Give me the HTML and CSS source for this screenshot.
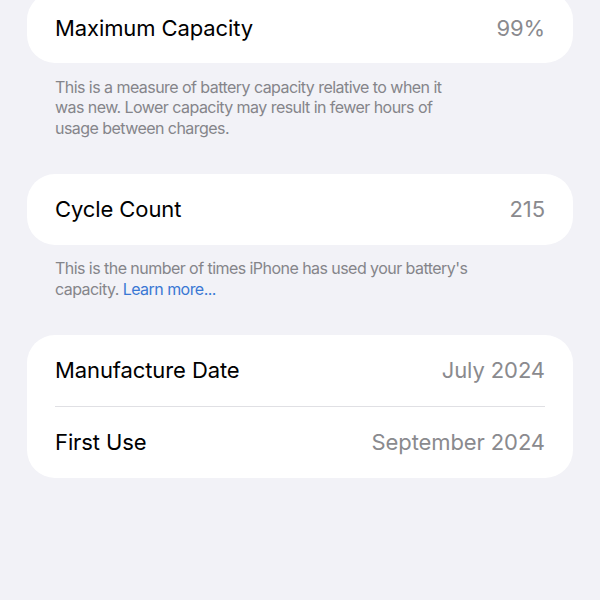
FILE: index.html
```html
<!DOCTYPE html>
<html>
<head>
<meta charset="utf-8">
<link rel="stylesheet" href="styles.css">
</head>
<body>
<div class="page">
  <div class="card first">
    <div class="row"><span class="label">Maximum Capacity</span><span class="value">99%</span></div>
  </div>
  <p class="footer">This is a measure of battery capacity relative to when it<br>was new. Lower capacity may result in fewer hours of<br>usage between charges.</p>
  <div class="card">
    <div class="row"><span class="label">Cycle Count</span><span class="value">215</span></div>
  </div>
  <p class="footer">This is the number of times iPhone has used your battery's<br>capacity. <span class="link">Learn more...</span></p>
  <div class="card">
    <div class="row"><span class="label">Manufacture Date</span><span class="value">July 2024</span></div>
    <div class="row sep"><span class="label">First Use</span><span class="value">September 2024</span></div>
  </div>
</div>
</body>
</html>
```

FILE: styles.css
```css
html, body {
  margin: 0;
  padding: 0;
  background: #f2f2f7;
  height: 100%;
}
.page {
  padding: 0 27px;
  font-family: Inter, "Noto Sans", "Liberation Sans", sans-serif;
}
.card {
  background: #ffffff;
  border-radius: 28px;
  padding: 0 28px;
}
.card.first {
  margin-top: -8px;
}
.row {
  height: 71px;
  display: flex;
  justify-content: space-between;
  align-items: center;
  font-size: 22px;
  letter-spacing: -0.1px;
}
.row.sep {
  border-top: 1px solid #e0e0e4;
  height: 71px;
}
.label {
  color: #000000;
}
.value {
  color: #8a8a8e;
}
.footer {
  margin: 13.5px 0 35.5px;
  padding: 0 28px;
  font-size: 16px;
  letter-spacing: -0.55px;
  line-height: 20.5px;
  color: #85858a;
}
.link {
  color: #3a78d4;
}
```
